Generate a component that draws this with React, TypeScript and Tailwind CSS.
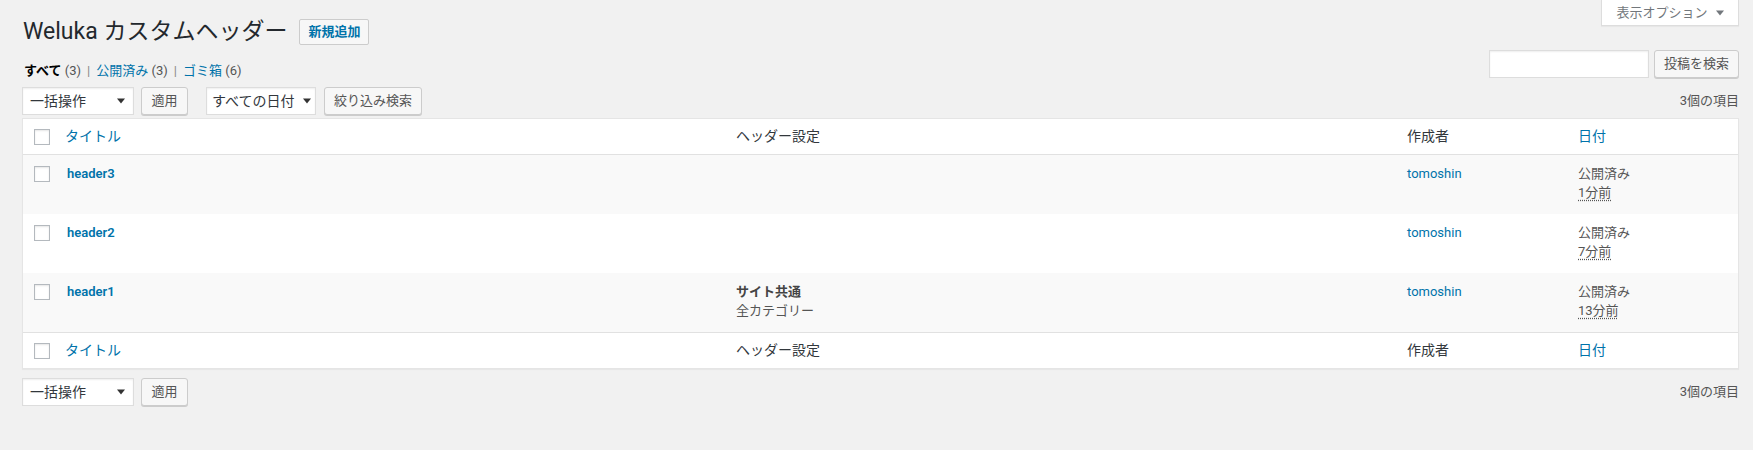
import React from "react";

const FONT = "font-['Roboto','Noto_Sans_CJK_JP',sans-serif]";

function Arrow({ className }: { className?: string }) {
  return (
    <svg width="8" height="6" viewBox="0 0 8 6" className={className}>
      <path d="M0 0.5 L8 0.5 L4 5.5 Z" fill="currentColor" />
    </svg>
  );
}

function Checkbox() {
  return (
    <span className="block w-4 h-4 bg-white border border-[#b4b9be] shadow-[inset_0_1px_2px_rgba(0,0,0,0.1)]" />
  );
}

function Button({ children, w }: { children: React.ReactNode; w: string }) {
  return (
    <button
      className={
        "h-[28px] flex items-center justify-center rounded-[3px] border border-[#ccc] bg-[#f7f7f7] text-[13px] text-[#555] shadow-[0_1px_0_#ccc] " +
        w
      }
    >
      {children}
    </button>
  );
}

function Select({ label, w, pad }: { label: string; w: string; pad: string }) {
  return (
    <div
      className={
        "h-[28px] flex items-center justify-between bg-white border border-[#ddd] shadow-[inset_0_1px_2px_rgba(0,0,0,0.07)] text-[14px] text-[#32373c] " +
        w +
        " " +
        pad
      }
    >
      <span>{label}</span>
      <Arrow className="text-[#333]" />
    </div>
  );
}

function HeadRow({ top }: { top?: boolean }) {
  return (
    <div
      className={
        "flex items-center h-[36px] bg-white text-[14px] text-[#32373c] " +
        (top ? "border-b border-[#e1e1e1]" : "border-t border-[#e1e1e1]")
      }
    >
      <div className="w-[42px] pl-[11px]">
        <Checkbox />
      </div>
      <div className="w-[671px] text-[#0073aa]">タイトル</div>
      <div className="w-[671px]">ヘッダー設定</div>
      <div className="w-[171px]">作成者</div>
      <div className="flex-1 text-[#0073aa]">日付</div>
    </div>
  );
}

const rows = [
  { title: "header3", setting: null, ago: "1分前" },
  { title: "header2", setting: null, ago: "7分前" },
  { title: "header1", setting: ["サイト共通", "全カテゴリー"], ago: "13分前" },
];

export default function App() {
  return (
    <div className={"min-h-screen bg-[#f1f1f1] pl-[22px] pr-[14px] " + FONT}>
      <div className="flex justify-between items-start">
        <div className="pt-[19px] flex items-center h-[45px] gap-[12px]">
          <h1 className="text-[23px] leading-[26px] text-[#23282d] pl-[1px]">Weluka カスタムヘッダー</h1>
          <button className="h-[26px] px-[8px] rounded-[2px] border border-[#ccc] bg-[#f7f7f7] text-[13px] font-semibold text-[#0073aa]">
            新規追加
          </button>
        </div>
        <div className="h-[26px] w-[138px] bg-white border border-t-0 border-[#ddd] shadow-[0_1px_1px_rgba(0,0,0,0.04)] flex items-center justify-center gap-[8px] text-[13px] text-[#72777c]">
          <span>表示オプション</span>
          <Arrow />
        </div>
      </div>

      <div className="flex justify-between items-start h-[42px]">
        <div className="pt-[16px] pl-[2px] text-[13px] leading-[20px] text-[#555]">
          <span className="font-bold text-black">すべて</span> (3)
          <span className="text-[#888] mx-[6px]">|</span>
          <span className="text-[#0073aa]">公開済み</span> (3)
          <span className="text-[#888] mx-[6px]">|</span>
          <span className="text-[#0073aa]">ゴミ箱</span> (6)
        </div>
        <div className="pt-[5px] flex gap-[5px]">
          <div className="w-[160px] h-[28px] bg-white border border-[#ddd] shadow-[inset_0_1px_2px_rgba(0,0,0,0.07)]" />
          <Button w="w-[85px]">投稿を検索</Button>
        </div>
      </div>

      <div className="flex items-center h-[28px]">
        <Select label="一括操作" w="w-[112px]" pad="pl-[7px] pr-[8px]" />
        <div className="ml-[7px]">
          <Button w="w-[47px]">適用</Button>
        </div>
        <div className="ml-[18px]">
          <Select label="すべての日付" w="w-[110px]" pad="pl-[5px] pr-[4px]" />
        </div>
        <div className="ml-[8px]">
          <Button w="w-[98px]">絞り込み検索</Button>
        </div>
        <div className="ml-auto text-[13px] text-[#555]">3個の項目</div>
      </div>

      <div className="mt-[3px] border border-[#e5e5e5] shadow-[0_1px_1px_rgba(0,0,0,0.04)] bg-white">
        <HeadRow top />
        {rows.map((r, i) => (
          <div
            key={r.title}
            className={"flex h-[59px] text-[13px] leading-[19px] text-[#555] " + (i % 2 === 0 ? "bg-[#f9f9f9]" : "bg-white")}
          >
            <div className="w-[42px] pl-[11px] pt-[11px]">
              <Checkbox />
            </div>
            <div className="w-[671px] pt-[9px] pl-[2px] font-semibold text-[#0073aa]">{r.title}</div>
            <div className="w-[671px] pt-[9px]">
              {r.setting && (
                <>
                  <div className="font-bold text-[#444]">{r.setting[0]}</div>
                  <div>{r.setting[1]}</div>
                </>
              )}
            </div>
            <div className="w-[171px] pt-[9px] text-[#0073aa]">tomoshin</div>
            <div className="flex-1 pt-[9px]">
              <div>公開済み</div>
              <div>
                <span className="underline decoration-dotted underline-offset-[3px]">{r.ago}</span>
              </div>
            </div>
          </div>
        ))}
        <HeadRow />
      </div>

      <div className="mt-[9px] flex items-center h-[28px]">
        <Select label="一括操作" w="w-[112px]" pad="pl-[7px] pr-[8px]" />
        <div className="ml-[7px]">
          <Button w="w-[47px]">適用</Button>
        </div>
        <div className="ml-auto text-[13px] text-[#555]">3個の項目</div>
      </div>
    </div>
  );
}
